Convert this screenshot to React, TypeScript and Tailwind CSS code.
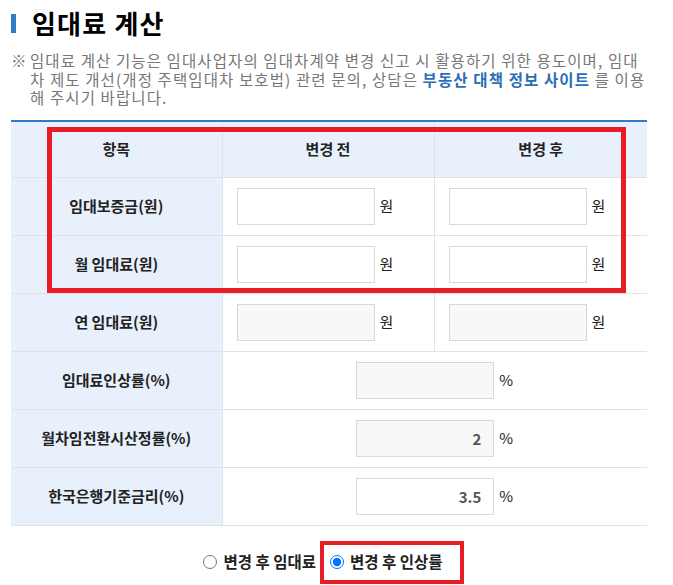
import { useState } from "react";

type Row = {
  label: string;
  before: { value: string; readOnly: boolean };
  after: { value: string; readOnly: boolean };
};

const MONEY_ROWS: Row[] = [
  { label: "임대보증금(원)", before: { value: "", readOnly: false }, after: { value: "", readOnly: false } },
  { label: "월 임대료(원)", before: { value: "", readOnly: false }, after: { value: "", readOnly: false } },
  { label: "연 임대료(원)", before: { value: "", readOnly: true }, after: { value: "", readOnly: true } },
];

const RATE_ROWS = [
  { label: "임대료인상률(%)", value: "", readOnly: true },
  { label: "월차임전환시산정률(%)", value: "2", readOnly: true },
  { label: "한국은행기준금리(%)", value: "3.5", readOnly: false },
];

const FONT = "font-['Noto_Sans_CJK_KR',sans-serif]";

function Field({ value, readOnly, unit }: { value: string; readOnly: boolean; unit: string }) {
  return (
    <span className="inline-flex items-center">
      <input
        defaultValue={value}
        readOnly={readOnly}
        className={`h-[37px] w-[138px] border border-[#d9d9d9] px-3 text-right text-[15px] font-bold text-[#555] outline-none ${
          readOnly ? "bg-[#f8f8f8]" : "bg-white"
        }`}
      />
      <span className="ml-[5px] text-[15px] text-[#222]">{unit}</span>
    </span>
  );
}

export default function App() {
  const [mode, setMode] = useState<"rent" | "rate">("rate");

  return (
    <div className={`relative min-h-[585px] bg-white pl-[11px] pr-[26px] ${FONT}`}>
      {/* Title */}
      <div className="flex h-[40px] items-center pt-[6px]">
        <span className="mr-[16px] h-[19px] w-[5px] bg-[#2f7bc4]" />
        <h1 className="text-[26px] font-bold leading-[34px] tracking-[1.2px] text-black">임대료 계산</h1>
      </div>

      {/* Notice */}
      <p className="mt-[11px] pl-[19px] -indent-[19px] text-[15.5px] leading-[18.5px] tracking-[1.1px] text-[#777]">
        <span className="inline-block w-[19px] indent-0 tracking-normal">※</span>
        임대료 계산 기능은 임대사업자의 임대차계약 변경 신고 시 활용하기 위한 용도이며, 임대
        <br />
        차 제도 개선(개정 주택임대차 보호법) 관련 문의, 상담은{" "}
        <span className="font-bold text-[#2c6db5]">부동산 대책 정보 사이트</span> 를 이용
        <br />
        해 주시기 바랍니다.
      </p>

      {/* Table */}
      <table className="mt-[13px] w-[636px] table-fixed border-collapse border-t-2 border-t-[#2f7bc4] text-[15px] text-[#222]">
        <colgroup>
          <col className="w-[211px]" />
          <col className="w-[212px]" />
          <col className="w-[213px]" />
        </colgroup>
        <thead>
          <tr className="h-[57px] bg-[#e8f0fb] font-bold">
            <th className="border-r border-b border-[#e2e2e2]">항목</th>
            <th className="border-r border-b border-[#e2e2e2]">변경 전</th>
            <th className="border-b border-[#e2e2e2]">변경 후</th>
          </tr>
        </thead>
        <tbody>
          {MONEY_ROWS.map((r) => (
            <tr key={r.label} className="h-[58px]">
              <td className="border-r border-b border-[#e2e2e2] bg-[#e8f0fb] text-center font-bold">{r.label}</td>
              <td className="border-r border-b border-[#e2e2e2] pl-[14px]">
                <Field value={r.before.value} readOnly={r.before.readOnly} unit="원" />
              </td>
              <td className="border-b border-[#e2e2e2] pl-[14px]">
                <Field value={r.after.value} readOnly={r.after.readOnly} unit="원" />
              </td>
            </tr>
          ))}
          {RATE_ROWS.map((r) => (
            <tr key={r.label} className="h-[58px]">
              <td className="border-r border-b border-[#e2e2e2] bg-[#e8f0fb] text-center font-bold">{r.label}</td>
              <td colSpan={2} className="border-b border-[#e2e2e2] text-center">
                <Field value={r.value} readOnly={r.readOnly} unit="%" />
              </td>
            </tr>
          ))}
        </tbody>
      </table>

      {/* Radio options */}
      <div className="mt-[24px] flex w-[636px] items-center justify-center gap-[6px] pr-[12px] text-[15.5px] font-bold text-[#222]">
        <label className="flex items-center gap-[6px]">
          <input
            type="radio"
            name="mode"
            checked={mode === "rent"}
            onChange={() => setMode("rent")}
            className="m-0 h-[14px] w-[14px]"
          />
          변경 후 임대료
        </label>
        <label className="ml-[8px] flex items-center gap-[6px]">
          <input
            type="radio"
            name="mode"
            checked={mode === "rate"}
            onChange={() => setMode("rate")}
            className="m-0 h-[14px] w-[14px]"
          />
          변경 후 인상률
        </label>
      </div>

      {/* Red highlight annotations */}
      <div className="pointer-events-none absolute left-[47px] top-[127px] h-[166px] w-[579px] border-[5px] border-[#e81c24]" />
      <div className="pointer-events-none absolute left-[320px] top-[541px] h-[43px] w-[144px] border-[4px] border-[#e81c24]" />
    </div>
  );
}
